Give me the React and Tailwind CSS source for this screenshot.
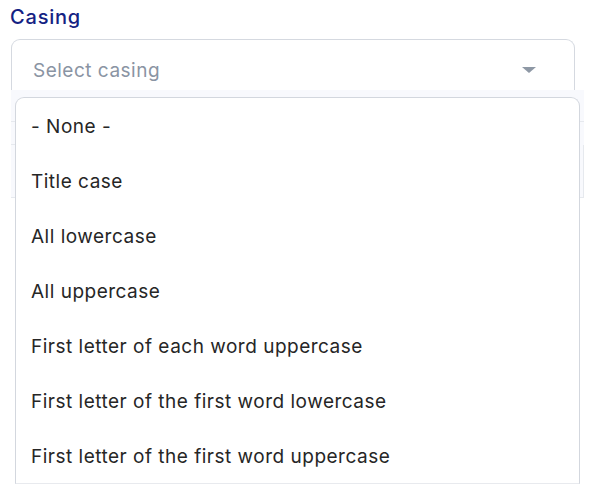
import React from "react";

const items = [
  "- None -",
  "Title case",
  "All lowercase",
  "All uppercase",
  "First letter of each word uppercase",
  "First letter of the first word lowercase",
  "First letter of the first word uppercase",
];

export default function App() {
  return (
    <div
      className="relative w-[601px] h-[501px] bg-white overflow-hidden"
      style={{ fontFamily: "Inter, 'Open Sans', sans-serif" }}
    >
      <div className="pl-[10px] pt-[4px] h-[39px] text-[20px] leading-[26px] font-medium tracking-[0.8px] text-[#142283]">
        Casing
      </div>
      <div className="ml-[11px] w-[564px] h-[51px] border border-b-0 border-[#d5d9e0] rounded-t-[9px] flex items-center pl-[21px] pr-[38px] pt-[12px]">
        <span className="flex-1 text-[19px] tracking-[0.5px] text-[#8a94a3]">Select casing</span>
        <svg width="14" height="6" viewBox="0 0 14 6" className="mt-[-3px]">
          <polygon points="0,0 14,0 7,6" fill="#8e98a5" />
        </svg>
      </div>
      <div className="ml-[11px] w-[573px] h-[108px] bg-[#f8f9fd] flex flex-col">
        <div className="h-[32px] border-b border-[#e6e9ee]" />
        <div className="h-[23px] flex">
          <div className="w-[4px] border-b border-[#e6e9ee]" />
        </div>
        <div className="flex-1 border-b border-[#e6e9ee] border-r" />
      </div>

      <div className="absolute left-[15px] top-[97px] w-[565px] bg-white border border-[#d3d7de] border-b-[#e8eaee] rounded-t-[9px]">
        {items.map((t) => (
          <div key={t} className="h-[55px] flex items-center pl-[15px] pt-[3px] text-[19px] tracking-[0.5px] text-[#262626]">
            {t}
          </div>
        ))}
      </div>
    </div>
  );
}
